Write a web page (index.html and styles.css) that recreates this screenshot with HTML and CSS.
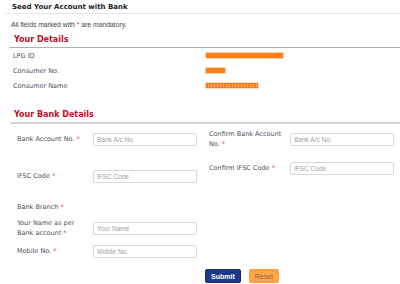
FILE: index.html
```html
<!DOCTYPE html>
<html lang="en">
<head>
    <meta charset="UTF-8">
    <meta name="viewport" content="width=device-width, initial-scale=1.0">
    <title>Seed Your Account with Bank</title>
    <link rel="stylesheet" href="styles.css">
</head>
<body>
    <div class="page">
        <h1 class="page-title">Seed Your Account with Bank</h1>
        <p class="note">All fields marked with <span class="req">*</span> are mandatory.</p>

        <!-- Your Details -->
        <h2 class="section-title">Your Details</h2>
        <div class="details">
            <div class="detail-row">
                <span class="detail-label">LPG ID</span>
                <span class="mask" style="width: 77px"></span>
            </div>
            <div class="detail-row">
                <span class="detail-label">Consumer No.</span>
                <span class="mask" style="width: 19px"></span>
            </div>
            <div class="detail-row">
                <span class="detail-label">Consumer Name</span>
                <span class="mask dotted" style="width: 52px"></span>
            </div>
        </div>

        <!-- Your Bank Details -->
        <h2 class="section-title bank">Your Bank Details</h2>
        <form class="bank-form">
            <div class="col left">
                <div class="field">
                    <label>Bank Account No. <span class="req">*</span></label>
                    <input type="text" placeholder="Bank A/c No.">
                </div>
                <div class="field ifsc">
                    <label>IFSC Code <span class="req">*</span></label>
                    <input type="text" placeholder="IFSC Code">
                </div>
                <div class="field branch">
                    <label>Bank Branch <span class="req">*</span></label>
                </div>
                <div class="field name">
                    <label>Your Name as per Bank account <span class="req">*</span></label>
                    <input type="text" placeholder="Your Name">
                </div>
                <div class="field mobile">
                    <label>Mobile No. <span class="req">*</span></label>
                    <input type="text" placeholder="Mobile No.">
                </div>
            </div>
            <div class="col right">
                <div class="field">
                    <label>Confirm Bank Account No. <span class="req">*</span></label>
                    <input type="text" placeholder="Bank A/c No.">
                </div>
                <div class="field confirm-ifsc">
                    <label>Confirm IFSC Code <span class="req">*</span></label>
                    <input type="text" placeholder="IFSC Code">
                </div>
            </div>
            <div class="actions">
                <button type="button" class="btn submit">Submit</button>
                <button type="reset" class="btn reset">Reset</button>
            </div>
        </form>
    </div>
</body>
</html>
```

FILE: styles.css
```css
* {
    margin: 0;
    padding: 0;
    box-sizing: border-box;
}
body {
    font-family: "DejaVu Sans", Verdana, sans-serif;
    background: #fff;
    color: #333;
}
.page {
    padding: 1px 0 0 5px;
}
.page-title {
    font-size: 7px;
    font-weight: bold;
    color: #222;
    padding: 1px 0 1px 7px;
    border-bottom: 1px solid #f0e2e8;
    line-height: 10px;
}
.note {
    font-family: "Liberation Sans", Arial, sans-serif;
    font-size: 6.8px;
    color: #444;
    padding: 6px 0 0 6px;
    line-height: 9px;
}
.req {
    color: #e03040;
}
/* Section headings */
.section-title {
    font-size: 8px;
    font-weight: bold;
    color: #c00d25;
    margin: 5px 0 0 4px;
    padding: 0 0 1px 5px;
    border-bottom: 1px solid #b0b0b0;
    line-height: 12px;
}
.section-title.bank {
    margin: 16px 0 0 6px;
    padding-left: 3px;
    border-bottom: 2px solid #d0d0d0;
}
.details {
    padding: 0 0 0 8px;
}
.detail-row {
    display: flex;
    align-items: center;
    height: 15px;
}
.detail-label {
    width: 193px;
    flex: none;
    font-size: 6.5px;
    color: #4e5060;
}
.mask {
    display: inline-block;
    height: 5px;
    background: #ff7d14;
    box-shadow: 0 0 0 0.5px #ffb070;
}
.mask.dotted {
    background: repeating-linear-gradient(90deg, #ff7d14 0 2px, #ffb48a 2px 3px);
    border-top: 1.5px solid #ff7d14;
    border-bottom: 1.5px solid #ff7d14;
}
/* Bank form */
.bank-form {
    display: grid;
    grid-template-columns: 192px 1fr;
    padding: 5px 0 0 12px;
}
.col {
    display: flex;
    flex-direction: column;
}
.field {
    display: flex;
    align-items: center;
    min-height: 20px;
}
.field label {
    flex: none;
    font-size: 6.5px;
    color: #4e5060;
    line-height: 10px;
    width: 76px;
    padding-right: 6px;
}
.col.right .field label {
    width: 81px;
}
.field input {
    flex: none;
    width: 104px;
    height: 13px;
    border: 1px solid #d8d8d8;
    border-radius: 2px;
    padding: 0 3px;
    font-family: "Liberation Sans", Arial, sans-serif;
    font-size: 6.5px;
    color: #333;
}
.field input::placeholder {
    color: #a0a0a0;
}
.field.ifsc {
    margin-top: 17px;
}
.field.branch {
    margin-top: 11px;
}
.field.branch label {
    width: auto;
}
.field.name {
    margin-top: 1px;
}
.field.mobile {
    margin-top: 3px;
}
.field.confirm-ifsc {
    margin-top: 9px;
}
.actions {
    grid-column: 1 / 3;
    display: flex;
    gap: 8px;
    padding: 8px 0 0 188px;
}
.btn {
    height: 14px;
    border-radius: 2px;
    font-family: "Liberation Sans", Arial, sans-serif;
    font-size: 7px;
    padding: 0 5px;
    cursor: pointer;
}
.btn.submit {
    background: #1d3886;
    border: 1px solid #122a6e;
    color: #fff;
    font-weight: bold;
}
.btn.reset {
    background: #ffa548;
    border: 1px solid #ff9a36;
    color: #8a6a50;
}
```
